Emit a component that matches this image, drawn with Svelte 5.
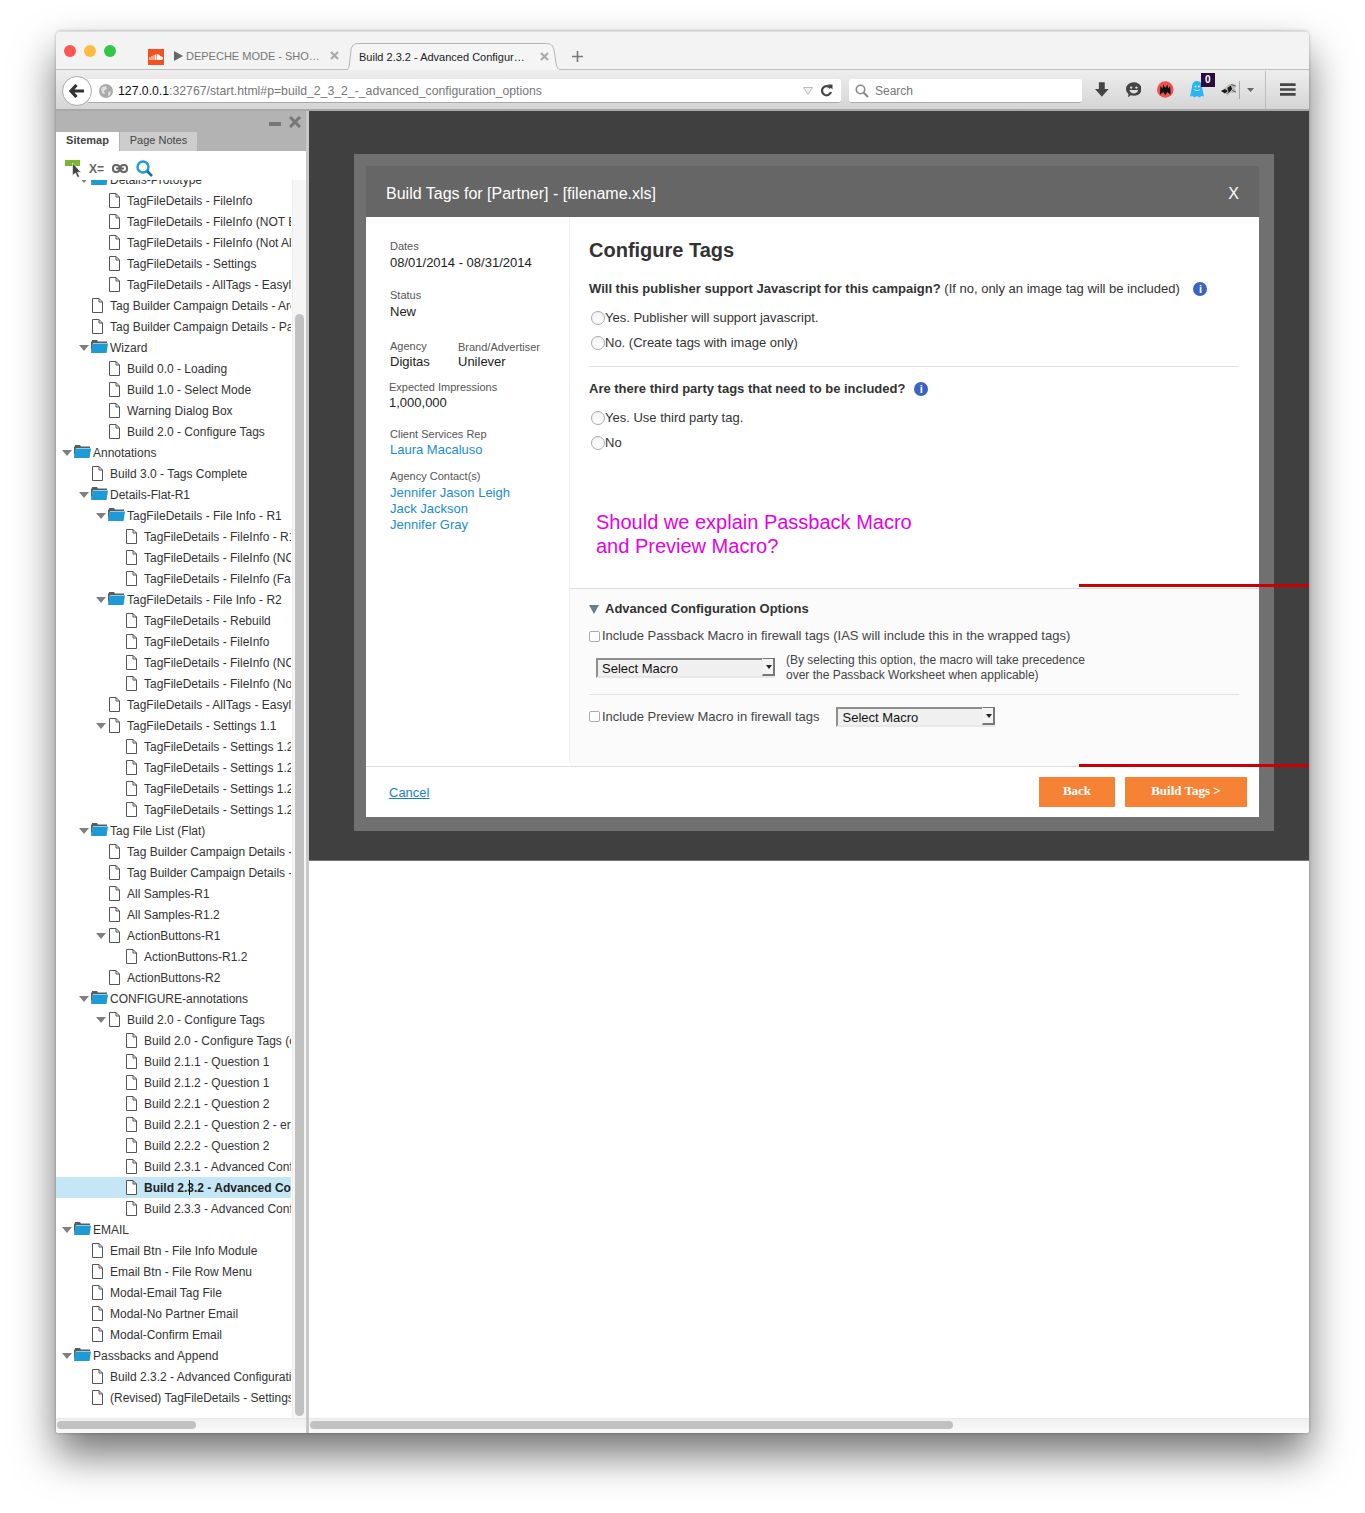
<script>
  // [level, kind, label, hasArrow]  kind: f = folder, d = document
  const tree = [
    [1, 'f', 'Details-Prototype', 1],
    [2, 'd', 'TagFileDetails - FileInfo'],
    [2, 'd', 'TagFileDetails - FileInfo (NOT Eligible)'],
    [2, 'd', 'TagFileDetails - FileInfo (Not All Tags)'],
    [2, 'd', 'TagFileDetails - Settings'],
    [2, 'd', 'TagFileDetails - AllTags - Easylist'],
    [1, 'd', 'Tag Builder Campaign Details - Archive'],
    [1, 'd', 'Tag Builder Campaign Details - Partner'],
    [1, 'f', 'Wizard', 1],
    [2, 'd', 'Build 0.0 - Loading'],
    [2, 'd', 'Build 1.0 - Select Mode'],
    [2, 'd', 'Warning Dialog Box'],
    [2, 'd', 'Build 2.0 - Configure Tags'],
    [0, 'f', 'Annotations', 1],
    [1, 'd', 'Build 3.0 - Tags Complete'],
    [1, 'f', 'Details-Flat-R1', 1],
    [2, 'f', 'TagFileDetails - File Info - R1', 1],
    [3, 'd', 'TagFileDetails - FileInfo - R1'],
    [3, 'd', 'TagFileDetails - FileInfo (NOT)'],
    [3, 'd', 'TagFileDetails - FileInfo (False)'],
    [2, 'f', 'TagFileDetails - File Info - R2', 1],
    [3, 'd', 'TagFileDetails - Rebuild'],
    [3, 'd', 'TagFileDetails - FileInfo'],
    [3, 'd', 'TagFileDetails - FileInfo (NOT)'],
    [3, 'd', 'TagFileDetails - FileInfo (Not)'],
    [2, 'd', 'TagFileDetails - AllTags - Easylist'],
    [2, 'd', 'TagFileDetails - Settings 1.1', 1],
    [3, 'd', 'TagFileDetails - Settings 1.2'],
    [3, 'd', 'TagFileDetails - Settings 1.2'],
    [3, 'd', 'TagFileDetails - Settings 1.2'],
    [3, 'd', 'TagFileDetails - Settings 1.2'],
    [1, 'f', 'Tag File List (Flat)', 1],
    [2, 'd', 'Tag Builder Campaign Details - A'],
    [2, 'd', 'Tag Builder Campaign Details - B'],
    [2, 'd', 'All Samples-R1'],
    [2, 'd', 'All Samples-R1.2'],
    [2, 'd', 'ActionButtons-R1', 1],
    [3, 'd', 'ActionButtons-R1.2'],
    [2, 'd', 'ActionButtons-R2'],
    [1, 'f', 'CONFIGURE-annotations', 1],
    [2, 'd', 'Build 2.0 - Configure Tags', 1],
    [3, 'd', 'Build 2.0 - Configure Tags (original)'],
    [3, 'd', 'Build 2.1.1 - Question 1'],
    [3, 'd', 'Build 2.1.2 - Question 1'],
    [3, 'd', 'Build 2.2.1 - Question 2'],
    [3, 'd', 'Build 2.2.1 - Question 2 - error'],
    [3, 'd', 'Build 2.2.2 - Question 2'],
    [3, 'd', 'Build 2.3.1 - Advanced Configuration'],
    [3, 'd', 'Build 2.3.2 - Advanced Configuration', 0, 1],
    [3, 'd', 'Build 2.3.3 - Advanced Configuration'],
    [0, 'f', 'EMAIL', 1],
    [1, 'd', 'Email Btn - File Info Module'],
    [1, 'd', 'Email Btn - File Row Menu'],
    [1, 'd', 'Modal-Email Tag File'],
    [1, 'd', 'Modal-No Partner Email'],
    [1, 'd', 'Modal-Confirm Email'],
    [0, 'f', 'Passbacks and Append', 1],
    [1, 'd', 'Build 2.3.2 - Advanced Configuration Options'],
    [1, 'd', '(Revised) TagFileDetails - Settings 1.2']
  ];
</script>

<div class="page">
  <div class="window">
    <div class="tabbar">
      <div class="lights">
        <span class="light red"></span>
        <span class="light yellow"></span>
        <span class="light green"></span>
      </div>
      <div class="tab idle">
        <svg class="favicon" width="16" height="16" viewBox="0 0 16 16">
          <rect width="16" height="16" fill="#f4511e" />
          <path d="M2 11V8M4 11V7M6 11V6M7.5 11V5.5" stroke="#fff" stroke-width="1" />
          <path d="M8.5 11V5.5C10.5 4.5 12 5.8 12.3 7.3C13.8 7 15 8 15 9.2C15 10.3 14 11 13 11Z" fill="#fff" />
        </svg>
        <svg class="play" width="9" height="10" viewBox="0 0 9 10"><path d="M0 0L9 5L0 10Z" fill="#666" /></svg>
        <span class="tabtext">DEPECHE MODE - SHO…</span>
        <svg class="tabx" width="9" height="9" viewBox="0 0 9 9"><path d="M1 1L8 8M8 1L1 8" stroke="#aaa" stroke-width="2.2" /></svg>
      </div>
      <div class="tab active">
        <svg class="tabshape" width="222" height="28" viewBox="0 0 222 28">
          <path d="M0 27.500C5 27.500 6 26 6.500 20L8 7C8.800 2.500 11 .5 15.500 .5H203C208 .5 210 2.500 211 7L213 20C214 26 216 27.500 222 27.500" fill="#f5f5f5" stroke="#b4b4b4" />
        </svg>
        <span class="tabtext">Build 2.3.2 - Advanced Configur…</span>
        <svg class="tabx" width="9" height="9" viewBox="0 0 9 9"><path d="M1 1L8 8M8 1L1 8" stroke="#aaa" stroke-width="2.2" /></svg>
      </div>
      <svg class="newtab" width="11" height="11" viewBox="0 0 11 11"><path d="M5.5 0V11M0 5.5H11" stroke="#777" stroke-width="1.6" /></svg>
    </div>

    <div class="navbar">
      <div class="back">
        <svg width="16" height="14" viewBox="0 0 16 14"><path d="M7.500 1L2 7L7.500 13M3 7H15" fill="none" stroke="#333" stroke-width="3.200" /></svg>
      </div>
      <div class="urlbar">
        <svg class="globe" width="14" height="14" viewBox="0 0 14 14">
          <circle cx="7" cy="7" r="7" fill="#aaa" />
          <path d="M3 3L7 2L8 5L5 7L6 10L4 10L2 6ZM9 8L12 7L11 11L9 12Z" fill="#ddd" />
        </svg>
        <span class="url"><b>127.0.0.1</b>:32767/start.html#p=build_2_3_2_-_advanced_configuration_options</span>
        <svg class="dropmark" width="10" height="8" viewBox="0 0 10 8"><path d="M.5 .5H9.5L5 7.5Z" fill="#eee" stroke="#bbb" /></svg>
        <svg class="reload" width="13" height="13" viewBox="0 0 13 13">
          <path d="M10.5 4.2A4.6 4.6 0 1 0 11 8" fill="none" stroke="#444" stroke-width="2.2" />
          <path d="M7.5 .5H12.5V5.5Z" fill="#444" />
        </svg>
      </div>
      <div class="searchbar">
        <svg width="14" height="14" viewBox="0 0 14 14"><circle cx="5.5" cy="5.5" r="4.2" fill="none" stroke="#888" stroke-width="1.6" /><path d="M8.7 8.7L13 13" stroke="#888" stroke-width="2" /></svg>
        <span class="searchtext">Search</span>
      </div>
      <div class="tools">
        <svg width="14" height="15" viewBox="0 0 14 15"><path d="M4 0H10V7H14L7 15L0 7H4Z" fill="#444" /></svg>
        <svg width="16" height="16" viewBox="0 0 16 16">
          <path d="M8 0C12.5 0 16 3 16 7C16 11 12.5 14 8 14C7 14 6 13.8 5 13.5L2 15.5L2.6 12C1 10.800 0 9 0 7C0 3 3.500 0 8 0Z" fill="#444" />
          <circle cx="5.300" cy="5.500" r="1.200" fill="#ddd" /><circle cx="10.700" cy="5.500" r="1.200" fill="#ddd" />
          <path d="M3.500 8H12.500C12 10.500 10.200 11.500 8 11.500C5.800 11.500 4 10.500 3.500 8Z" fill="#ddd" />
        </svg>
        <svg width="17" height="17" viewBox="0 0 17 17">
          <circle cx="8.500" cy="8.500" r="8.500" fill="#ef5350" />
          <path d="M3 14L3.500 5L5.500 7.500L6.500 3.500L8.500 7L10.500 3.500L11.500 7.500L13.500 5L14 14L10.500 11L8.500 14.500L6.500 11Z" fill="#111" />
        </svg>
        <div class="ghost">
          <svg width="14" height="17" viewBox="0 0 14 17">
            <path d="M7 0C10.500 0 12 3 12 6L14 15.500L11.500 15L9.500 16.500L7 15L4.500 16.500L2.500 15L0 15.500L2 6C2 3 3.500 0 7 0Z" fill="#29b6f6" />
            <circle cx="5.500" cy="5.500" r=".9" fill="#fff" /><circle cx="8.800" cy="5.500" r=".9" fill="#fff" />
            <path d="M4.500 8.500C6 10 8 10 9.500 8.500" fill="none" stroke="#fff" />
          </svg>
          <span class="badge">0</span>
        </div>
        <svg class="bird" width="16" height="14" viewBox="0 0 16 14">
          <path d="M0 8L4 5L8 1L12 .5L16 2L14 5.500L16 10L10 9.500L6 13.500L5.500 10Z" fill="#bdbdbd" />
          <path d="M0 8L4 6L7 8L4 10.500ZM6.500 5L10 2.500L11.500 6L8 10Z" fill="#1a1a1a" />
          <path d="M10.500 1.500L15 3M11.500 7.500L15 9M6 11L8 9" stroke="#555" />
        </svg>
        <span class="sep small"></span>
        <svg class="caret" width="7" height="4" viewBox="0 0 7 4"><path d="M0 0H7L3.500 4Z" fill="#666" /></svg>
        <span class="sep"></span>
        <svg class="menu" width="16" height="13" viewBox="0 0 16 13"><path d="M0 1.500H16M0 6.500H16M0 11.500H16" stroke="#444" stroke-width="2.800" /></svg>
      </div>
    </div>

    <div class="content">
      <aside class="sidebar">
        <div class="sidehead">
          <div class="sidectl">
            <span class="minus"></span>
            <svg width="12" height="12" viewBox="0 0 12 12"><path d="M1 1L11 11M11 1L1 11" stroke="#777" stroke-width="3" /></svg>
          </div>
          <div class="sidetabs">
            <span class="stab on">Sitemap</span>
            <span class="stab">Page Notes</span>
          </div>
        </div>
        <div class="sidetools">
          <svg width="17" height="18" viewBox="0 0 17 18">
            <rect y="0" width="15" height="6" fill="#7cb52e" />
            <path d="M7.500 3V15.500L10.500 13L12.500 17.500L14.500 16.500L12.500 12.200H16Z" fill="#444" stroke="#fff" stroke-width=".6" />
          </svg>
          <span class="xeq">X=</span>
          <svg class="link" width="16" height="9" viewBox="0 0 16 9">
            <rect x="1" y="1" width="6.500" height="7" rx="3" fill="none" stroke="#666" stroke-width="2" />
            <rect x="8.500" y="1" width="6.500" height="7" rx="3" fill="none" stroke="#666" stroke-width="2" />
            <path d="M4 4.500H12" stroke="#666" stroke-width="2" />
          </svg>
          <svg class="mag" width="17" height="17" viewBox="0 0 17 17"><circle cx="7" cy="7" r="5.500" fill="none" stroke="#1d9bd7" stroke-width="2.400" /><path d="M11 11L16 16" stroke="#1d6f99" stroke-width="2.600" /></svg>
        </div>
        <div class="treewrap">
          <div class="treeclip">
            <ul class="tree">
              {#each tree as [level, kind, label, arrow, selected]}
                <li class="row" class:selected style="padding-left:{6 + level * 17}px">
                  <span class="arrowslot">
                    {#if arrow}<svg width="10" height="6" viewBox="0 0 10 6"><path d="M0 0H10L5 6Z" fill="#808080" /></svg>{/if}
                  </span>
                  {#if kind === 'f'}
                    <svg class="folder" width="17" height="13" viewBox="0 0 17 13">
                      <path d="M0 13V1.500H1V0H6L7 1.500H16V3H2Z" fill="#5c5c5c" />
                      <path d="M1.500 3.500H17L15.500 13H0Z" fill="#1d9bd7" />
                    </svg>
                  {:else}
                    <svg class="doc" width="11" height="15" viewBox="0 0 11 15">
                      <path d="M.5 .5H7L10.500 4V14.500H.5ZM7 .5V4H10.500" fill="#fff" stroke="#555" />
                    </svg>
                  {/if}
                  <span class="label">{label}</span>
                  {#if selected}<span class="ibeam"></span>{/if}
                </li>
              {/each}
            </ul>
          </div>
          <div class="vscroll"><span class="vthumb"></span></div>
        </div>
        <div class="hscroll side"><span class="hthumb"></span></div>
      </aside>

      <main class="stage">
        <div class="overlay">
          <div class="modal">
            <div class="modalhead">
              <span>Build Tags for [Partner] - [filename.xls]</span>
              <span class="close">X</span>
            </div>
            <div class="modalbody">
              <div class="info">
                <div class="block"><small>Dates</small><p>08/01/2014 - 08/31/2014</p></div>
                <div class="block"><small>Status</small><p>New</p></div>
                <div class="block pair">
                  <div><small>Agency</small><p>Digitas</p></div>
                  <div class="brand"><small>Brand/Advertiser</small><p>Unilever</p></div>
                </div>
                <div class="block impressions"><small>Expected Impressions</small><p>1,000,000</p></div>
                <div class="block client"><small>Client Services Rep</small><p class="person">Laura Macaluso</p></div>
                <div class="block contacts">
                  <small>Agency Contact(s)</small>
                  <p class="person">Jennifer Jason Leigh</p>
                  <p class="person">Jack Jackson</p>
                  <p class="person">Jennifer Gray</p>
                </div>
              </div>
              <div class="config">
                <div class="questions">
                  <h2>Configure Tags</h2>
                  <div class="question">
                    <b>Will this publisher support Javascript for this campaign?</b> (If no, only an image tag will be included)
                    <span class="infoicon first">i</span>
                  </div>
                  <label class="radio"><input type="radio" name="js" />Yes. Publisher will support javascript.</label>
                  <label class="radio"><input type="radio" name="js" />No. (Create tags with image only)</label>
                  <hr />
                  <div class="question q2">
                    <b>Are there third party tags that need to be included?</b>
                    <span class="infoicon">i</span>
                  </div>
                  <label class="radio"><input type="radio" name="third" />Yes. Use third party tag.</label>
                  <label class="radio"><input type="radio" name="third" />No</label>
                  <div class="note">Should we explain Passback Macro<br />and Preview Macro?</div>
                </div>
                <div class="advanced">
                  <div class="advhead">
                    <svg width="10" height="9" viewBox="0 0 10 9"><path d="M0 0H10L5 9Z" fill="#64808f" /></svg>
                    <b>Advanced Configuration Options</b>
                  </div>
                  <label class="check"><input type="checkbox" />Include Passback Macro in firewall tags (IAS will include this in the wrapped tags)</label>
                  <div class="macro">
                    <div class="select wide">Select Macro<span class="selbtn"></span></div>
                    <div class="macronote">(By selecting this option, the macro will take precedence<br />over the Passback Worksheet when applicable)</div>
                  </div>
                  <hr />
                  <div class="preview">
                    <label class="check"><input type="checkbox" />Include Preview Macro in firewall tags</label>
                    <div class="select">Select Macro<span class="selbtn"></span></div>
                  </div>
                </div>
              </div>
            </div>
            <div class="modalfoot">
              <a href="#cancel">Cancel</a>
              <div class="actions">
                <button class="back-btn">Back</button>
                <button class="build-btn">Build Tags &gt;</button>
              </div>
            </div>
          </div>
          <span class="redline one"></span>
          <span class="redline two"></span>
        </div>
        <div class="blank"></div>
        <div class="hscroll"><span class="hthumb long"></span></div>
      </main>
    </div>
  </div>
</div>

<style>
  :global(body) {
    margin: 0;
    background: #fff;
  }
  .page {
    height: 1513px;
    box-sizing: border-box;
    padding: 31px 56px 0;
    font-family: "Liberation Sans", Arial, sans-serif;
    color: #333;
    overflow: hidden;
  }
  .window {
    width: 1253px;
    height: 1402px;
    display: flex;
    flex-direction: column;
    border-radius: 5px 5px 3px 3px;
    background: #f3f3f3;
    box-shadow: 0 22px 42px rgba(0, 0, 0, 0.55), 0 0 3px rgba(0, 0, 0, 0.3);
    overflow: hidden;
  }

  /* browser chrome */
  .tabbar {
    height: 39px;
    flex: none;
    box-sizing: border-box;
    display: flex;
    align-items: flex-end;
    background: #f3f3f3;
    border-top: 1px solid #ddd;
    border-bottom: 1px solid #bdbdbd;
    position: relative;
  }
  .lights {
    position: absolute;
    left: 8px;
    top: 13px;
    display: flex;
    gap: 8px;
  }
  .light {
    width: 12px;
    height: 12px;
    border-radius: 50%;
  }
  .red { background: #fc5753; }
  .yellow { background: #fdbc40; }
  .green { background: #33c748; }
  .tab {
    height: 27px;
    display: flex;
    align-items: center;
    font-size: 11px;
    position: relative;
    color: #777;
  }
  .tab.idle {
    margin-left: 92px;
    width: 195px;
    flex: none;
  }
  .favicon { margin-right: 10px; margin-top: 3px; flex: none; }
  .play { margin-right: 3px; flex: none; }
  .tab.idle .tabtext { width: 134px; white-space: nowrap; }
  .tab.idle .tabx { margin-left: 10px; flex: none; }
  .tab.active {
    width: 222px;
    flex: none;
    margin-bottom: -1px;
    padding-left: 16px;
    box-sizing: border-box;
    color: #222;
  }
  .tabshape {
    position: absolute;
    left: 0;
    top: 0;
  }
  .tabtext { margin-top: 1px; }
  .active .tabtext, .active .tabx { position: relative; }
  .active .tabtext { width: 172px; white-space: nowrap; }
  .active .tabx { margin-left: 9px; flex: none; }
  .newtab { margin: 0 0 7px 7px; }
  .navbar {
    height: 41px;
    flex: none;
    display: flex;
    align-items: center;
    box-sizing: border-box;
    padding: 3px 13px 0 6px;
    background: linear-gradient(#eeeeee, #d5d5d5);
    border-bottom: 2px solid #a8a8a8;
    position: relative;
  }
  .back {
    width: 30px;
    height: 30px;
    flex: none;
    box-sizing: border-box;
    border-radius: 50%;
    background: #fff;
    border: 1px solid #aaa;
    display: flex;
    align-items: center;
    justify-content: center;
    position: relative;
    z-index: 1;
  }
  .urlbar, .searchbar {
    height: 24px;
    box-sizing: border-box;
    background: #fff;
    border-radius: 0 3px 3px 0;
    border-bottom: 1px solid #aaa;
    display: flex;
    align-items: center;
    font-size: 12px;
  }
  .urlbar {
    width: 753px;
    flex: none;
    margin-left: -4px;
    padding-left: 8px;
  }
  .globe { margin-right: 5px; margin-left: 3px; }
  .url { color: #777; font-size: 12.25px; margin-top: 1px; }
  .url b { color: #111; font-weight: normal; }
  .dropmark { margin-left: auto; margin-right: 7px; }
  .reload { margin-right: 8px; }
  .searchbar {
    width: 233px;
    flex: none;
    margin-left: 8px;
    padding-left: 6px;
    gap: 6px;
    border-radius: 3px;
    color: #777;
  }
  .searchtext { margin-top: 1px; }
  .tools {
    flex: 1;
    display: flex;
    align-items: center;
    padding-left: 13px;
    min-width: 0;
    margin-top: -3px;
  }
  .tools > svg:nth-child(2) { margin-left: 17px; }
  .tools > svg:nth-child(3) { margin-left: 16px; }
  .ghost {
    margin-left: 16px;
    position: relative;
    display: flex;
  }
  .badge {
    position: absolute;
    left: 11px;
    top: -8px;
    width: 14px;
    height: 14px;
    background: #2b0a3d;
    color: #fff;
    font-size: 10px;
    font-weight: bold;
    line-height: 14px;
    text-align: center;
  }
  .bird { margin-left: 17px; }
  .sep {
    width: 1px;
    height: 38px;
    background: #b9bec4;
    margin-left: 11px;
  }
  .sep.small {
    height: 18px;
    margin-left: 3px;
    margin-right: 7px;
    background: #aaa;
  }
  .caret { flex: none; }
  .menu { margin-left: 14px; }

  .content {
    flex: 1;
    min-height: 0;
    display: flex;
    background: #c8c8c8;
  }

  /* sitemap panel */
  .sidebar {
    width: 250px;
    flex: none;
    display: flex;
    flex-direction: column;
    background: #fff;
    margin-right: 3px;
  }
  .sidehead {
    height: 40px;
    flex: none;
    box-sizing: border-box;
    background: #b3b3b3;
    padding-top: 5px;
    display: flex;
    flex-direction: column;
    justify-content: space-between;
  }
  .sidectl {
    display: flex;
    justify-content: flex-end;
    align-items: center;
    gap: 8px;
    padding-right: 5px;
  }
  .minus {
    width: 12px;
    height: 4px;
    background: #777;
    margin-top: 4px;
  }
  .sidetabs {
    display: flex;
    font-size: 11px;
  }
  .stab {
    width: 77px;
    height: 19px;
    line-height: 16px;
    text-align: center;
    background: #cdcdcd;
    color: #444;
    box-sizing: border-box;
  }
  .stab.on {
    width: 63px;
    background: #fff;
    font-weight: bold;
    margin-right: 1px;
  }
  .sidetools {
    height: 29px;
    flex: none;
    display: flex;
    align-items: center;
    box-sizing: border-box;
    padding: 6px 0 0 9px;
  }
  .xeq {
    font-size: 12px;
    font-weight: bold;
    color: #666;
    margin-left: 7px;
  }
  .link { margin-left: 8px; }
  .mag { margin-left: 8px; }
  .treewrap {
    flex: 1;
    min-height: 0;
    display: flex;
  }
  .treeclip {
    width: 236px;
    flex: none;
    overflow: hidden;
  }
  .tree {
    list-style: none;
    margin: -11px 0 0;
    padding: 0;
  }
  .row {
    height: 21px;
    display: flex;
    align-items: center;
    font-size: 12px;
    white-space: nowrap;
    color: #333;
    position: relative;
    /* labels stop at x=292, the highlight runs the whole row */
    width: 235px;
    box-sizing: border-box;
    overflow: hidden;
  }
  .row.selected {
    background: #c5e6f5;
    font-weight: bold;
    color: #222;
  }
  .arrowslot {
    width: 13px;
    flex: none;
    display: flex;
    align-items: center;
  }
  .folder { flex: none; margin: -2px 2px 0 -1px; }
  .doc { flex: none; margin-right: 7px; }
  .label { flex: none; }
  .ibeam {
    position: absolute;
    left: 133px;
    top: 3px;
    width: 1px;
    height: 15px;
    background: #111;
  }
  .vscroll {
    width: 14px;
    flex: none;
    background: #f6f6f6;
    border-left: 1px solid #ececec;
    box-sizing: border-box;
    padding: 134px 2px 2px 2px;
    display: flex;
  }
  .vthumb {
    flex: 1;
    background: #c1c1c1;
    border-radius: 5px;
  }
  .hscroll {
    height: 15px;
    flex: none;
    box-sizing: border-box;
    background: linear-gradient(#f0f0f0, #fafafa);
    border-top: 1px solid #e8e8e8;
    padding: 2px 1px;
    display: flex;
  }
  .hscroll.side { padding-right: 14px; }
  .hthumb {
    width: 139px;
    height: 8px;
    background: #c1c1c1;
    border-radius: 4px;
  }
  .hthumb.long { width: 643px; }

  /* main stage */
  .stage {
    flex: 1;
    min-width: 0;
    display: flex;
    flex-direction: column;
    background: #fff;
    position: relative;
  }
  .overlay {
    height: 750px;
    flex: none;
    box-sizing: border-box;
    background: #404040;
    border-bottom: 1px solid #777;
    padding: 43px 35px 0 45px;
  }
  .blank { flex: 1; }
  .modal {
    height: 677px;
    box-sizing: border-box;
    background: #707070;
    padding: 12px 15px 14px 12px;
    display: flex;
    flex-direction: column;
  }
  .modalhead {
    height: 51px;
    flex: none;
    box-sizing: border-box;
    background: #666;
    color: #fff;
    font-size: 16px;
    display: flex;
    align-items: center;
    justify-content: space-between;
    padding: 4px 20px 0;
  }
  .close { font-size: 16px; }
  .modalbody {
    flex: 1;
    min-height: 0;
    display: flex;
    background: #fff;
  }
  .info {
    width: 204px;
    flex: none;
    box-sizing: border-box;
    padding: 23px 0 0 24px;
    border-right: 1px solid #eee;
    height: 545px;
  }
  .block { margin-bottom: 18px; }
  .block small {
    display: block;
    font-size: 11px;
    line-height: 13px;
    color: #555;
    margin-bottom: 2px;
  }
  .block p {
    margin: 0;
    font-size: 13px;
    line-height: 16px;
    color: #222;
  }
  .pair {
    display: flex;
    margin-top: 20px;
    margin-bottom: 11px;
  }
  .pair small { margin-bottom: 1px; }
  .pair > div:first-child { width: 68px; }
  .brand { padding-top: 1px; }
  .brand p { margin-top: -1px; }
  .impressions { margin-left: -1px; margin-bottom: 17px; }
  .impressions small { margin-bottom: 1px; }
  .client { margin-bottom: 12px; }
  .client small { margin-bottom: 1px; }
  .contacts small { margin-bottom: 2px; }
  .block .person { color: #1b8bd6; }
  .config {
    flex: 1;
    min-width: 0;
    display: flex;
    flex-direction: column;
  }
  .questions {
    height: 372px;
    flex: none;
    box-sizing: border-box;
    padding: 21px 20px 0 19px;
    border-bottom: 1px solid #ddd;
  }
  h2 {
    margin: 0 0 18px;
    font-size: 20px;
    line-height: 24px;
    color: #333;
  }
  .question {
    font-size: 13px;
    line-height: 18px;
    color: #333;
    display: flex;
    align-items: center;
    white-space: pre-wrap;
  }
  .q2 { margin-top: 13px; }
  .infoicon {
    width: 14px;
    height: 14px;
    border-radius: 50%;
    background: #3b63c4;
    color: #fff;
    font-size: 11px;
    font-weight: bold;
    line-height: 14px;
    text-align: center;
    margin-left: 9px;
    flex: none;
  }
  .infoicon.first { margin-left: 10px; }
  .radio, .check {
    display: flex;
    align-items: center;
    font-size: 13px;
    line-height: 25px;
    color: #333;
  }
  .radio:first-of-type { margin-top: 7px; }
  .radio input {
    appearance: none;
    width: 14px;
    height: 14px;
    margin: 0 0 0 2px;
    border: 1px solid #aaa;
    border-radius: 50%;
    background: linear-gradient(#f2f2f2, #fff);
  }
  .questions hr { margin: 11px 0 0; }
  .questions .q2 + .radio { margin-top: 7px; }
  hr {
    border: 0;
    border-top: 1px solid #e2e2e2;
    margin: 0;
  }
  .note {
    margin: 55px 0 0 7px;
    color: #e600e6;
    font-size: 20px;
    line-height: 24px;
  }
  .advanced {
    flex: 1;
    min-height: 0;
    box-sizing: border-box;
    padding: 12px 20px 0 19px;
    background: #fbfbfb;
  }
  .advhead {
    display: flex;
    align-items: center;
    gap: 6px;
    font-size: 13px;
    line-height: 16px;
    color: #333;
    margin-bottom: 10px;
  }
  .check {
    line-height: 18px;
    color: #444;
  }
  .check input {
    appearance: none;
    width: 11px;
    height: 11px;
    margin: 0 2px 0 0;
    border: 1px solid #aaa;
    border-radius: 2px;
    background: #fff;
  }
  .macro {
    display: flex;
    align-items: center;
    margin: 8px 0 11px 7px;
  }
  .select {
    width: 159px;
    height: 20px;
    flex: none;
    box-sizing: border-box;
    border: 2px solid #8f8f8f;
    border-right-color: #e8e8e8;
    border-bottom-color: #e8e8e8;
    background: #f0f0f0;
    font-size: 13px;
    line-height: 17px;
    color: #111;
    padding-left: 4px;
    position: relative;
  }
  .select.wide { width: 179px; }
  .selbtn {
    position: absolute;
    right: -2px;
    top: -2px;
    width: 13px;
    height: 18px;
    box-sizing: border-box;
    background: #f4f4f4;
    border: 1px solid #777;
    border-left-color: #eee;
    border-top-color: #777;
    border-right-width: 2px;
    border-bottom-width: 2px;
  }
  .selbtn::after {
    content: "";
    position: absolute;
    left: 3px;
    top: 6px;
    border: 3px solid transparent;
    border-top: 4px solid #222;
    border-bottom: 0;
  }
  .macronote {
    margin-left: 11px;
    font-size: 12px;
    line-height: 15px;
    color: #444;
  }
  .preview {
    display: flex;
    align-items: center;
    margin-top: 11px;
  }
  .preview .select { margin-left: 17px; margin-top: 1px; }
  .modalfoot {
    height: 51px;
    flex: none;
    box-sizing: border-box;
    background: #fff;
    border-top: 1px solid #ddd;
    display: flex;
    align-items: center;
    justify-content: space-between;
    padding: 0 12px 0 23px;
  }
  .modalfoot a {
    color: #1b7fcc;
    font-size: 13px;
    margin-top: 1px;
  }
  .actions {
    display: flex;
    gap: 10px;
    margin-top: -1px;
  }
  .actions button {
    height: 30px;
    border: 0;
    background: #f58235;
    color: #fff;
    font-family: "Liberation Serif", serif;
    font-weight: bold;
    font-size: 13px;
    padding: 0 0 2px;
  }
  .back-btn { width: 76px; }
  .build-btn { width: 122px; }
  .redline {
    position: absolute;
    right: 0;
    width: 230px;
    height: 3px;
    background: #cc0000;
  }
  .redline.one { top: 473px; }
  .redline.two { top: 653px; }
</style>
